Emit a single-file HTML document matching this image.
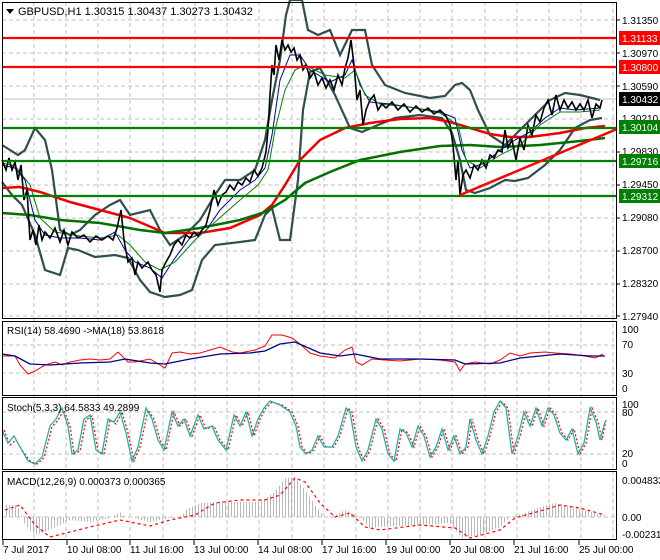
<!DOCTYPE html>
<html><head><meta charset="utf-8"><style>
html,body{margin:0;padding:0;background:#fff;}
svg{display:block;font-family:"Liberation Sans",sans-serif;}
</style></head><body>
<svg width="660" height="560" viewBox="0 0 660 560" xmlns="http://www.w3.org/2000/svg">
<defs>
<pattern id="hp" width="3" height="10" patternUnits="userSpaceOnUse"><rect x="0" y="0" width="1" height="10" fill="#b8b8b8"/></pattern>
</defs>
<rect width="660" height="560" fill="#fff"/>
<!-- vertical grid -->
<g stroke="#c0c0c0" stroke-dasharray="4,3" stroke-width="1">
<line x1="34" y1="2" x2="34" y2="540"/><line x1="66" y1="2" x2="66" y2="540"/><line x1="98" y1="2" x2="98" y2="540"/><line x1="130" y1="2" x2="130" y2="540"/><line x1="163" y1="2" x2="163" y2="540"/><line x1="195" y1="2" x2="195" y2="540"/><line x1="227" y1="2" x2="227" y2="540"/><line x1="259" y1="2" x2="259" y2="540"/><line x1="292" y1="2" x2="292" y2="540"/><line x1="324" y1="2" x2="324" y2="540"/><line x1="356" y1="2" x2="356" y2="540"/><line x1="388" y1="2" x2="388" y2="540"/><line x1="420" y1="2" x2="420" y2="540"/><line x1="452" y1="2" x2="452" y2="540"/><line x1="485" y1="2" x2="485" y2="540"/><line x1="517" y1="2" x2="517" y2="540"/><line x1="549" y1="2" x2="549" y2="540"/><line x1="581" y1="2" x2="581" y2="540"/><line x1="613" y1="2" x2="613" y2="540"/>
<line x1="2" y1="20" x2="617" y2="20"/><line x1="2" y1="53" x2="617" y2="53"/><line x1="2" y1="86" x2="617" y2="86"/><line x1="2" y1="119" x2="617" y2="119"/><line x1="2" y1="152" x2="617" y2="152"/><line x1="2" y1="185" x2="617" y2="185"/><line x1="2" y1="218" x2="617" y2="218"/><line x1="2" y1="251" x2="617" y2="251"/><line x1="2" y1="284" x2="617" y2="284"/><line x1="2" y1="316" x2="617" y2="316"/>
<line x1="2" y1="345" x2="617" y2="345"/><line x1="2" y1="373" x2="617" y2="373"/>
<line x1="2" y1="412" x2="617" y2="412"/><line x1="2" y1="454" x2="617" y2="454"/>
<line x1="2" y1="517" x2="617" y2="517"/>
</g>
<line x1="2" y1="99" x2="617" y2="99" stroke="#c0c0c0"/>
<!-- Bollinger -->
<g fill="none" stroke="#2f4f4f" stroke-width="2.2">
<polyline points="2,145 10,150 18,155 25,150 35,128 45,140 52,170 60,230 70,235 80,230 95,215 110,205 120,200 130,215 150,210 160,230 170,245 185,235 200,220 215,195 225,180 240,180 255,170 265,140 272,100 280,60 286,15 290,0 302,0 308,30 318,35 330,30 340,55 352,30 365,30 372,65 385,85 405,93 430,98 445,96 455,85 462,83 470,90 478,110 490,135 505,145 520,130 535,115 550,100 565,93 580,95 600,100"/>
<polyline points="2,182 12,195 22,205 35,235 45,270 60,275 68,248 78,250 95,257 115,255 128,258 140,280 150,292 165,297 180,295 192,290 202,260 215,245 240,242 255,240 265,215 272,208 280,240 290,240 298,180 303,110 310,72 320,68 335,95 350,128 362,132 378,125 395,118 420,115 442,118 452,133 460,160 466,190 475,193 490,188 505,180 515,181 528,178 545,165 560,150 575,128 590,120 602,118"/>
</g>
<!-- MAs thick -->
<polyline fill="none" stroke="#e00" stroke-width="2.5" points="2,188 20,187 40,192 70,202 100,210 130,218 165,233 200,233 230,228 260,215 272,205 285,185 300,160 320,140 345,128 370,123 400,119 430,118 450,122 470,128 490,134 510,137 530,137 560,133 585,128 605,126"/>
<polyline fill="none" stroke="#007000" stroke-width="2.5" points="2,213 30,215 60,220 100,223 140,230 165,233 200,228 240,220 265,212 285,200 305,183 330,172 360,160 400,152 440,146 470,145 500,147 540,145 580,141 605,138"/>
<!-- small MAs -->
<polyline fill="none" stroke="#0000a0" stroke-width="1" points="2,165 15,168 25,180 35,220 45,235 60,238 80,238 100,240 115,232 125,250 135,262 150,268 162,278 175,258 190,238 205,232 220,210 240,190 255,180 265,168 272,135 280,80 290,55 300,55 310,70 330,82 345,75 352,60 360,85 370,102 390,104 415,108 440,112 455,118 462,150 470,168 485,163 500,150 515,140 530,132 545,118 560,108 575,110 600,108"/>
<polyline fill="none" stroke="#008000" stroke-width="1" points="2,163 15,166 30,185 40,218 55,232 80,236 100,238 118,235 130,245 145,262 160,270 175,262 195,240 215,222 240,200 258,185 268,170 275,130 285,90 295,70 305,65 325,75 345,78 355,70 365,95 380,104 410,107 440,113 458,125 466,160 480,168 500,155 520,145 540,125 560,112 580,112 600,110"/>
<!-- price bars as jagged line -->
<polyline fill="none" stroke="#000" stroke-width="1.6" points="2,160 6,170 9,158 12,170 15,162 18,180 21,165 24,200 27,190 30,240 33,230 36,245 39,225 42,240 45,232 50,238 55,228 60,242 64,230 68,245 72,232 78,238 84,235 90,242 96,236 102,240 108,236 113,240 117,228 121,210 124,240 128,262 132,258 135,275 138,262 142,268 148,262 152,270 156,275 160,292 162,270 166,262 170,255 174,245 178,240 182,245 186,235 190,238 194,232 198,236 202,230 206,225 210,210 214,190 218,205 222,195 226,192 230,185 234,190 238,182 242,185 246,178 250,182 254,170 258,176 262,168 266,152 268,130 270,95 272,65 274,75 276,45 279,60 282,40 285,50 288,45 291,52 294,48 297,60 300,55 303,70 306,65 310,78 314,72 318,85 322,78 326,88 330,80 334,90 338,75 342,85 345,68 348,58 351,40 354,65 357,100 360,90 363,125 366,110 370,100 374,95 378,110 382,104 386,108 392,102 398,110 404,104 410,112 416,106 422,112 428,108 434,114 440,110 446,116 450,125 453,145 456,180 458,160 460,195 463,175 466,170 470,178 474,165 478,170 482,160 486,168 490,155 494,158 498,150 502,152 505,130 508,148 512,140 516,160 520,138 524,150 528,125 532,135 536,115 540,122 544,108 548,100 552,115 556,95 560,110 564,100 568,108 572,102 576,110 580,104 584,110 588,100 592,118 596,104 600,108 602,100"/>
<!-- horizontal levels -->
<g stroke-width="2.2">
<line x1="2" y1="38" x2="617" y2="38" stroke="#f00"/>
<line x1="2" y1="67" x2="617" y2="67" stroke="#f00"/>
<line x1="2" y1="128" x2="617" y2="128" stroke="#008000"/>
<line x1="2" y1="161" x2="617" y2="161" stroke="#008000"/>
<line x1="2" y1="196" x2="617" y2="196" stroke="#008000"/>
</g>
<line x1="460" y1="195" x2="617" y2="129" stroke="#f00" stroke-width="2.5"/>
<!-- header -->
<polygon points="6,9 14,9 10,14" fill="#000"/>
<text x="18" y="15" font-size="11" fill="#000">GBPUSD,H1  1.30315 1.30437 1.30273 1.30432</text>
<!-- RSI -->
<polyline fill="none" stroke="#f00" stroke-width="1" points="2,356 15,356 20,365 28,374 35,371 45,365 55,362 62,365 70,362 80,360 90,359 100,360 110,359 118,352 122,356 128,362 135,362 150,359 160,365 165,368 172,353 180,352 190,354 200,353 210,350 220,347 232,352 240,353 255,350 265,346 272,335 282,335 292,338 300,344 310,353 320,356 335,358 345,350 352,347 356,362 362,365 372,359 385,360 400,361 420,359 440,360 455,362 460,371 465,364 475,362 490,364 500,360 510,353 520,356 530,353 545,352 555,353 570,354 585,356 595,358 603,354"/>
<polyline fill="none" stroke="#00008b" stroke-width="1.3" points="2,354 15,356 30,364 50,365 80,363 110,362 125,359 150,363 165,364 190,359 220,354 250,353 265,351 280,344 295,342 320,353 340,356 355,354 380,359 420,359 455,360 465,364 500,363 520,358 540,356 560,354 590,356 605,356"/>
<text x="7" y="334" font-size="10" fill="#000">RSI(14) 58.4690  -&gt;MA(18) 53.8618</text>
<!-- Stoch -->
<polyline fill="none" stroke="#f00" stroke-width="1.2" stroke-dasharray="2,2" points="4,430 10,445 16,440 22,450 30,461 37,464 44,458 52,427 58,420 64,410 70,426 74,454 80,451 86,420 92,416 98,451 104,454 110,420 116,424 122,412 128,433 134,461 140,447 148,410 154,419 160,440 166,450 174,412 180,426 186,419 192,436 200,415 206,429 214,426 220,440 228,450 236,415 242,426 248,412 254,436 260,419 266,408 272,402 282,405 292,412 298,426 302,447 308,454 314,450 320,436 326,447 334,447 340,436 348,408 352,412 358,447 364,461 370,450 378,419 384,429 390,454 396,461 402,429 408,433 414,447 420,426 426,436 432,457 438,447 444,429 450,450 456,436 462,454 468,447 472,419 478,440 484,454 490,436 496,412 502,402 508,408 514,454 520,436 526,412 532,426 538,408 544,426 550,408 556,415 562,433 568,440 574,429 580,454 586,443 592,408 598,422 602,440 606,420"/>
<polyline fill="none" stroke="#20b2aa" stroke-width="1.3" points="2,430 8,443 14,436 20,447 28,461 35,464 42,457 50,426 56,419 62,408 68,426 72,454 78,450 84,419 90,415 96,450 102,454 108,419 114,422 120,412 126,433 132,461 138,447 146,408 152,419 158,440 164,450 172,412 178,426 184,419 190,436 198,415 204,429 212,426 218,440 226,450 234,415 240,426 246,412 252,436 258,419 264,408 270,401 280,405 290,412 296,426 300,447 306,454 312,450 318,436 324,447 332,447 338,436 346,408 350,412 356,447 362,461 368,450 376,419 382,429 388,454 394,461 400,429 406,433 412,447 418,426 424,436 430,457 436,447 442,429 448,450 454,436 460,454 466,447 470,419 476,440 482,454 488,436 494,412 500,401 506,408 512,454 518,436 524,412 530,426 536,408 542,426 548,408 554,415 560,433 566,440 572,429 578,454 584,443 590,408 596,422 600,440 605,422"/>
<text x="7" y="411" font-size="10" fill="#000">Stoch(5,3,3) 64.5833 49.2899</text>
<!-- MACD -->
<polygon fill="url(#hp)" points="5,505 15,505 20,510 22,517 25,525 35,535 45,532 60,525 70,520 90,522 110,518 120,512 125,517 130,517 150,522 170,518 182,517 185,510 200,503 230,502 260,502 275,492 285,478 295,477 305,490 315,505 325,517 335,515 345,510 355,515 360,517 370,528 380,527 420,525 450,523 455,530 462,538 480,535 500,527 510,517 525,513 540,507 555,503 570,507 585,510 605,516 605,517 5,517"/>
<polyline fill="none" stroke="#f00" stroke-width="1.2" stroke-dasharray="3,3" points="5,510 20,505 35,525 50,537 70,532 90,527 120,520 150,526 170,520 195,515 215,503 240,500 265,500 280,495 295,478 305,482 320,503 335,517 350,513 365,527 380,530 420,525 455,528 470,538 500,530 515,518 540,511 560,505 580,508 605,515"/>
<text x="7" y="485" font-size="10" fill="#000">MACD(12,26,9) 0.000373 0.000365</text>
<!-- panel borders -->
<g fill="none" stroke="#000" stroke-width="1">
<rect x="2.5" y="2.5" width="614" height="316"/>
<rect x="2.5" y="321.5" width="614" height="74"/>
<rect x="2.5" y="397.5" width="614" height="72"/>
<rect x="2.5" y="471.5" width="614" height="68"/>
</g>
<!-- date ticks -->
<g stroke="#000"><line x1="3" y1="540" x2="3" y2="545"/><line x1="67" y1="540" x2="67" y2="545"/><line x1="130" y1="540" x2="130" y2="545"/><line x1="194" y1="540" x2="194" y2="545"/><line x1="258" y1="540" x2="258" y2="545"/><line x1="322" y1="540" x2="322" y2="545"/><line x1="386" y1="540" x2="386" y2="545"/><line x1="450" y1="540" x2="450" y2="545"/><line x1="514" y1="540" x2="514" y2="545"/><line x1="579" y1="540" x2="579" y2="545"/></g>
<g font-size="10" fill="#000">
<text x="3" y="553">7 Jul 2017</text><text x="67" y="553">10 Jul 08:00</text><text x="130" y="553">11 Jul 16:00</text><text x="194" y="553">13 Jul 00:00</text><text x="258" y="553">14 Jul 08:00</text><text x="322" y="553">17 Jul 16:00</text><text x="386" y="553">19 Jul 00:00</text><text x="450" y="553">20 Jul 08:00</text><text x="514" y="553">21 Jul 16:00</text><text x="579" y="553">25 Jul 00:00</text>
</g>
<!-- right axis labels -->
<g font-size="10" fill="#000">
<text x="622" y="24">1.31350</text><text x="622" y="57">1.30970</text><text x="622" y="90">1.30590</text><text x="622" y="122">1.30210</text><text x="622" y="155">1.29830</text><text x="622" y="188">1.29450</text><text x="622" y="221">1.29080</text><text x="622" y="254">1.28700</text><text x="622" y="287">1.28320</text><text x="622" y="320">1.27940</text>
<text x="622" y="333">100</text><text x="622" y="348">70</text><text x="622" y="377">30</text><text x="622" y="392">0</text>
<text x="622" y="408">100</text><text x="622" y="416">80</text><text x="622" y="457">20</text><text x="622" y="467">0</text>
<text x="622" y="484">0.004833</text><text x="622" y="521">0.00</text><text x="622" y="538">-0.002312</text>
</g>
<g stroke="#000"><line x1="617" y1="20" x2="620" y2="20"/><line x1="617" y1="53" x2="620" y2="53"/><line x1="617" y1="86" x2="620" y2="86"/><line x1="617" y1="152" x2="620" y2="152"/><line x1="617" y1="185" x2="620" y2="185"/><line x1="617" y1="218" x2="620" y2="218"/><line x1="617" y1="251" x2="620" y2="251"/><line x1="617" y1="284" x2="620" y2="284"/><line x1="617" y1="316" x2="620" y2="316"/></g>
<!-- badges -->
<rect x="619" y="31" width="41" height="14" fill="#f00"/><text x="622" y="42" font-size="10" fill="#fff">1.31133</text>
<rect x="619" y="60" width="41" height="14" fill="#f00"/><text x="622" y="71" font-size="10" fill="#fff">1.30800</text>
<rect x="619" y="92" width="41" height="14" fill="#000"/><text x="622" y="103" font-size="10" fill="#fff">1.30432</text>
<rect x="619" y="120" width="41" height="14" fill="#008000"/><text x="622" y="131" font-size="10" fill="#fff">1.30104</text>
<rect x="619" y="154" width="41" height="14" fill="#008000"/><text x="622" y="165" font-size="10" fill="#fff">1.29716</text>
<rect x="619" y="189" width="41" height="14" fill="#008000"/><text x="622" y="200" font-size="10" fill="#fff">1.29312</text>
</svg>
</body></html>
